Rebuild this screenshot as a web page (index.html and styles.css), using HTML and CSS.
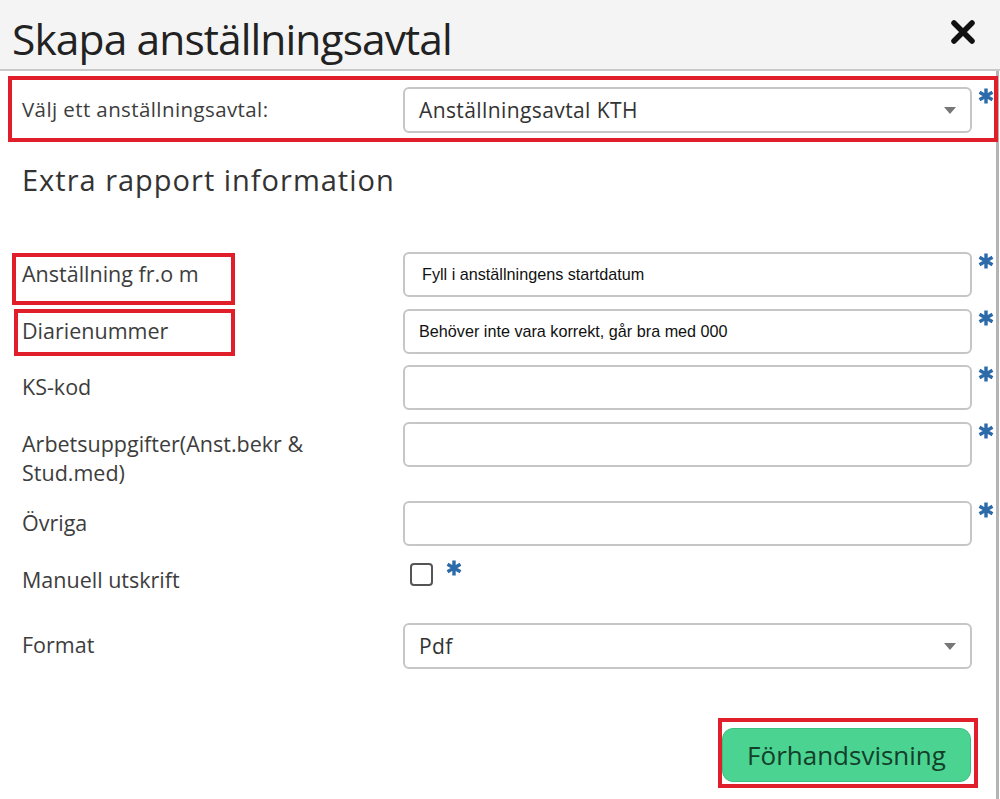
FILE: index.html
```
<!DOCTYPE html>
<html lang="sv">
<head>
<meta charset="utf-8">
<title>Skapa anställningsavtal</title>
<link rel="stylesheet" href="styles.css">
</head>
<body>
<div class="dialog">
  <div class="header">
    <h1 class="title">Skapa anställningsavtal</h1>
    <svg class="close" width="26" height="26" viewBox="0 0 26 26"><path d="M4 4 L22 22 M22 4 L4 22" stroke="#111" stroke-width="5.5" stroke-linecap="round"/></svg>
  </div>
  <div class="body">
    <div class="row row-main">
      <div class="label label-small">Välj ett anställningsavtal:</div>
      <div class="field">
        <div class="select"><span>Anställningsavtal KTH</span><span class="caret"></span></div>
        <svg class="req" width="18" height="18" viewBox="0 0 18 18"><path d="M9 1.5 V16.5 M2.5 5.2 L15.5 12.8 M15.5 5.2 L2.5 12.8" stroke="#2d6aa9" stroke-width="3.4"/></svg>
      </div>
    </div>
    <h2 class="section">Extra rapport information</h2>
    <div class="rows">
      <div class="row">
        <div class="label">Anställning fr.o m</div>
        <div class="field">
          <div class="input"><span class="hint hint-1">Fyll i anställningens startdatum</span></div>
          <svg class="req" width="18" height="18" viewBox="0 0 18 18"><path d="M9 1.5 V16.5 M2.5 5.2 L15.5 12.8 M15.5 5.2 L2.5 12.8" stroke="#2d6aa9" stroke-width="3.4"/></svg>
        </div>
      </div>
      <div class="row">
        <div class="label">Diarienummer</div>
        <div class="field">
          <div class="input"><span class="hint">Behöver inte vara korrekt, går bra med 000</span></div>
          <svg class="req" width="18" height="18" viewBox="0 0 18 18"><path d="M9 1.5 V16.5 M2.5 5.2 L15.5 12.8 M15.5 5.2 L2.5 12.8" stroke="#2d6aa9" stroke-width="3.4"/></svg>
        </div>
      </div>
      <div class="row">
        <div class="label">KS-kod</div>
        <div class="field">
          <div class="input"></div>
          <svg class="req" width="18" height="18" viewBox="0 0 18 18"><path d="M9 1.5 V16.5 M2.5 5.2 L15.5 12.8 M15.5 5.2 L2.5 12.8" stroke="#2d6aa9" stroke-width="3.4"/></svg>
        </div>
      </div>
      <div class="row row-tall">
        <div class="label">Arbetsuppgifter(Anst.bekr &amp;<br>Stud.med)</div>
        <div class="field">
          <div class="input"></div>
          <svg class="req" width="18" height="18" viewBox="0 0 18 18"><path d="M9 1.5 V16.5 M2.5 5.2 L15.5 12.8 M15.5 5.2 L2.5 12.8" stroke="#2d6aa9" stroke-width="3.4"/></svg>
        </div>
      </div>
      <div class="row">
        <div class="label">Övriga</div>
        <div class="field">
          <div class="input"></div>
          <svg class="req" width="18" height="18" viewBox="0 0 18 18"><path d="M9 1.5 V16.5 M2.5 5.2 L15.5 12.8 M15.5 5.2 L2.5 12.8" stroke="#2d6aa9" stroke-width="3.4"/></svg>
        </div>
      </div>
      <div class="row row-check">
        <div class="label">Manuell utskrift</div>
        <div class="field field-check">
          <span class="checkbox"></span>
          <svg class="req req-check" width="18" height="18" viewBox="0 0 18 18"><path d="M9 1.5 V16.5 M2.5 5.2 L15.5 12.8 M15.5 5.2 L2.5 12.8" stroke="#2d6aa9" stroke-width="3.4"/></svg>
        </div>
      </div>
      <div class="row row-format">
        <div class="label">Format</div>
        <div class="field">
          <div class="select"><span>Pdf</span><span class="caret"></span></div>
        </div>
      </div>
    </div>
    <div class="actions">
      <button class="btn">Förhandsvisning</button>
    </div>
  </div>
  <div class="mark mark-1"></div>
  <div class="mark mark-2"></div>
  <div class="mark mark-3"></div>
  <div class="mark mark-4"></div>
</div>
</body>
</html>
```
FILE: styles.css
```
* { box-sizing: border-box; }
html, body { margin: 0; padding: 0; background: #fff; }
body {
  font-family: "Open Sans", "Noto Sans", sans-serif;
  color: #333;
  width: 1000px;
  height: 799px;
  overflow: hidden;
}
.dialog { position: relative; width: 1000px; height: 799px; }
.header {
  height: 71px;
  background: #f4f4f4;
  border-bottom: 2px solid #c9c9c9;
  display: flex;
  align-items: flex-start;
  justify-content: space-between;
  padding: 0 24px 0 12px;
}
.title {
  margin: 10px 0 0 0;
  font-weight: 400;
  font-size: 42.5px;
  line-height: 58px;
  letter-spacing: -0.9px;
  color: #222;
}
.close { margin-top: 19px; }
.body {
  height: 728px;
  border-right: 3px solid #b4b4b4;
  width: 999px;
  padding: 16px 0 0 22px;
}
.row { display: flex; align-items: flex-start; margin-bottom: 11.5px; }
.row-main { margin-bottom: 0; }
.label {
  width: 381px;
  flex: none;
  font-size: 21.5px;
  line-height: 29px;
  padding-top: 7px;
  color: #3d3d3d;
}
.label-small { font-size: 20.5px; letter-spacing: 0.4px; padding-top: 8px; }
.field { display: flex; align-items: flex-start; }
.select, .input {
  width: 569px;
  height: 45px;
  border: 2px solid #c6c6c6;
  border-radius: 6px;
  background: #fff;
  display: flex;
  align-items: center;
  padding: 0 14px;
  font-size: 21px;
  letter-spacing: 0.4px;
  color: #333;
}
.select { height: 46px; justify-content: space-between; }
.caret {
  width: 0; height: 0;
  border-left: 6px solid transparent;
  border-right: 6px solid transparent;
  border-top: 7px solid #777;
}
.req { margin: 0 0 0 5px; flex: none; }
.section {
  margin: 27px 0 0 0;
  font-weight: 400;
  font-size: 29px;
  letter-spacing: 1px;
  line-height: 40px;
  color: #333;
  height: 92px;
}
.hint {
  font-family: "Liberation Sans", Arial, sans-serif;
  font-size: 16.2px;
  letter-spacing: 0;
  color: #111;
}
.hint-1 { margin-left: 3px; }
.row-tall { margin-bottom: 14.5px; }
.row-check { height: 54px; }
.field-check { padding-top: 5.5px; padding-left: 7px; }
.checkbox {
  display: block;
  width: 23px; height: 23px;
  border: 2px solid #555;
  border-radius: 4px;
}
.req-check { margin: -4px 0 0 12px; }
.actions { display: flex; justify-content: flex-end; padding-right: 25px; margin-top: 59px; }
.btn {
  width: 249px;
  height: 54px;
  background: #4bd392;
  border: 1px solid #3cbf80;
  border-radius: 11px;
  font-family: "Open Sans", sans-serif;
  font-size: 26px;
  color: #14402a;
  padding: 0;
}
.mark { position: absolute; border: 4px solid #e01f2b; }
.mark-1 { left: 8px; top: 76px; width: 990px; height: 66px; }
.mark-2 { left: 12px; top: 253px; width: 223px; height: 52px; }
.mark-3 { left: 14px; top: 309px; width: 221px; height: 47px; }
.mark-4 { left: 718px; top: 718px; width: 260px; height: 70px; }
```
